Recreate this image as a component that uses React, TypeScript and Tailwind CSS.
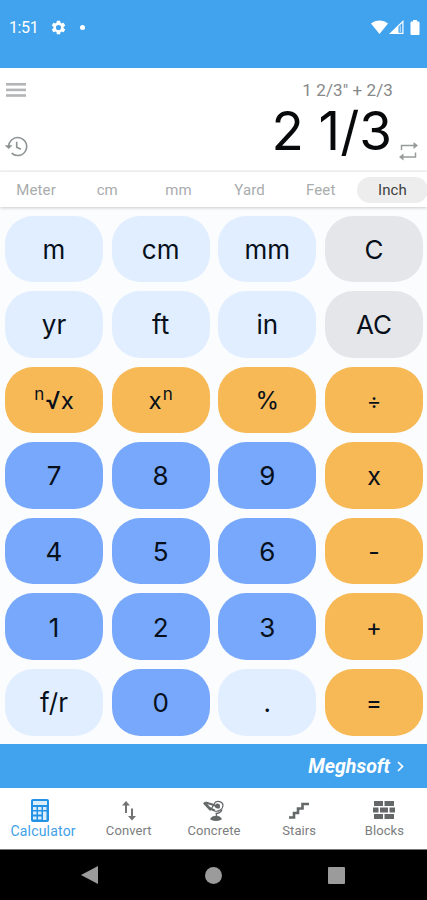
import React from 'react';

interface KeyDef {
  label: React.ReactNode;
  tone: 'light' | 'gray' | 'orange' | 'blue';
}

const tones = {
  light: 'bg-[#e1eeff]',
  gray: 'bg-[#e5e6e9]',
  orange: 'bg-[#f6b956]',
  blue: 'bg-[#78a8fb]',
};

const RootLabel = () => (
  <span className="flex items-baseline pt-px">
    <span className="mt-[-3px] self-start text-[17px] leading-[17px]">n</span>
    <span className="ml-px text-[24px] font-medium">√</span>
    <span className="text-[24px]">x</span>
  </span>
);

const PowerLabel = () => (
  <span className="flex items-baseline pt-px">
    <span className="text-[24px]">x</span>
    <span className="mt-[-3px] ml-px self-start text-[17px] leading-[17px]">n</span>
  </span>
);

const Sign = ({ children }: { children: string }) => <span className="pt-px text-[22px]">{children}</span>;

const keys: KeyDef[] = [
  { label: 'm', tone: 'light' },
  { label: 'cm', tone: 'light' },
  { label: 'mm', tone: 'light' },
  { label: 'C', tone: 'gray' },
  { label: 'yr', tone: 'light' },
  { label: 'ft', tone: 'light' },
  { label: 'in', tone: 'light' },
  { label: 'AC', tone: 'gray' },
  { label: <RootLabel />, tone: 'orange' },
  { label: <PowerLabel />, tone: 'orange' },
  { label: <span className="text-[24px]">%</span>, tone: 'orange' },
  { label: <Sign>÷</Sign>, tone: 'orange' },
  { label: '7', tone: 'blue' },
  { label: '8', tone: 'blue' },
  { label: '9', tone: 'blue' },
  { label: <span className="text-[25px]">x</span>, tone: 'orange' },
  { label: '4', tone: 'blue' },
  { label: '5', tone: 'blue' },
  { label: '6', tone: 'blue' },
  { label: <span className="text-[25px]">-</span>, tone: 'orange' },
  { label: '1', tone: 'blue' },
  { label: '2', tone: 'blue' },
  { label: '3', tone: 'blue' },
  { label: <span className="text-[24px]">+</span>, tone: 'orange' },
  { label: 'f/r', tone: 'light' },
  { label: '0', tone: 'blue' },
  { label: '.', tone: 'light' },
  { label: <span className="text-[24px]">=</span>, tone: 'orange' },
];

const units = ['Meter', 'cm', 'mm', 'Yard', 'Feet', 'Inch'];

const StatusBar: React.FC = () => (
  <div className="flex h-[68px] items-start justify-between bg-[#41a3ed] pt-[18px] pl-[9px] pr-[7px] text-white">
    <div className="flex h-5 items-center">
      <span className="w-[42px] text-[16px] leading-5 tracking-[-0.400px]">1:51</span>
      <svg className="mb-[2px]" width="15" height="15" viewBox="1.500 1.500 21 21" fill="currentColor">
        <path d="M19.14 12.94c.04-.3.06-.61.06-.94s-.02-.64-.07-.94l2.03-1.58a.5.5 0 0 0 .12-.61l-1.92-3.32a.5.5 0 0 0-.59-.22l-2.39.96a7 7 0 0 0-1.62-.94l-.36-2.54A.5.5 0 0 0 13.92 2.4h-3.84a.5.5 0 0 0-.47.41l-.36 2.54a7 7 0 0 0-1.62.94l-2.39-.96a.5.5 0 0 0-.59.22L2.73 8.87a.5.5 0 0 0 .12.61l2.03 1.58a6 6 0 0 0 0 1.88l-2.03 1.58a.5.5 0 0 0-.12.61l1.92 3.32c.12.22.37.29.59.22l2.39-.96c.5.38 1.03.7 1.62.94l.36 2.54c.05.24.24.41.48.41h3.84c.24 0 .44-.17.47-.41l.36-2.54a7 7 0 0 0 1.62-.94l2.39.96c.22.08.47 0 .59-.22l1.92-3.32a.5.5 0 0 0-.12-.61zM12 15.6a3.6 3.6 0 1 1 0-7.2 3.6 3.6 0 0 1 0 7.2z" />
      </svg>
      <span className="mb-[2px] ml-[14px] h-[5px] w-[5px] rounded-full bg-white" />
    </div>
    <div className="flex h-[18px] items-center">
      <svg width="17" height="14" viewBox="0 0 17 14" fill="currentColor">
        <path d="M0 3.600C4.800-.600 12.200-.600 17 3.600L8.500 14z" />
      </svg>
      <svg className="ml-[1px]" width="15" height="14" viewBox="0 0 15 14" fill="none">
        <path d="M0 14 14.500 0V14z" fill="currentColor" />
        <path d="M9.500 6.600 13.300 3v9.800H9.500z" fill="#41a3ed" />
        <path d="M10.700 6.500v5.500h1.300V5z" fill="#a9d5f7" />
      </svg>
      <svg className="ml-[6px]" width="10" height="15" viewBox="0 0 10 15" fill="currentColor">
        <path d="M3 0h4v1.500h1.500a1 1 0 0 1 1 1V14a1 1 0 0 1-1 1h-7a1 1 0 0 1-1-1V2.500a1 1 0 0 1 1-1H3z" />
      </svg>
    </div>
  </div>
);

const Display: React.FC = () => (
  <div className="flex h-[104px] justify-between border-b-2 border-[#f3f4f5] bg-white">
    <div className="flex flex-col pl-[5px] pt-[15px]">
      <svg className="ml-[1px]" width="20" height="16" viewBox="0 0 20 16" fill="#b3b5b6">
        <rect y="0" width="20" height="2.600" />
        <rect y="5.600" width="20" height="2.600" />
        <rect y="11.200" width="20" height="2.600" />
      </svg>
      <svg className="mt-[37px]" width="23" height="21" viewBox="0 0 23 21" fill="none" stroke="#8d9394" strokeWidth="1.600">
        <path d="M3.700 11.500A9 9 0 1 1 6.600 17.200" />
        <path d="M-.2 9.300h7.800L3.700 13z" fill="#8d9394" stroke="none" />
        <path d="M11.700 5.800v5.400l4.200 2" />
      </svg>
    </div>
    <div className="flex">
      <div className="flex flex-col items-end">
        <span className="mt-[11px] pr-[6px] text-[17px] leading-[22px] tracking-[0.100px] text-[#868889]">1 2/3" + 2/3</span>
        <span className="pr-[7px] font-[Inter,sans-serif] text-[53px] leading-[60px] text-[#08090a]">2 1/3</span>
      </div>
      <svg className="mt-[73px] mr-[9px]" width="19" height="20" viewBox="0 0 19 20" fill="none" stroke="#979b9c" strokeWidth="1.500">
        <path d="M2.500 9V4.500h13M16.500 11.500V16h-13" />
        <path d="M14.500 1v7l4.500-3.500zM4.500 12.500v7L0 16z" fill="#979b9c" stroke="none" />
      </svg>
    </div>
  </div>
);

const UnitTabs: React.FC = () => (
  <div className="z-10 grid h-[35px] grid-cols-6 items-center bg-white pt-px text-center text-[15px] tracking-[0.100px] text-[#a9acad] shadow-[0_1px_3px_rgba(0,0,0,0.200)]">
    {units.map((unit) => (
      <span
        key={unit}
        className={unit === 'Inch' ? 'mr-[-1px] ml-[1px] rounded-full bg-[#ededee] pt-px leading-[25px] text-[#3d3f40]' : 'pt-px pl-px leading-[25px]'}
      >
        {unit}
      </span>
    ))}
  </div>
);

const Keypad: React.FC = () => (
  <div className="grid h-[537px] grid-cols-4 grid-rows-7 gap-x-[8.700px] gap-y-[8.800px] bg-[#fafcfe] pt-[8.500px] pr-1 pb-[8.500px] pl-[5px]">
    {keys.map((key, i) => (
      <button
        key={i}
        className={`flex items-center justify-center rounded-[28px] pt-[2px] font-[Inter,sans-serif] text-[26px] leading-none text-[#07101a] ${tones[key.tone]}`}
      >
        {key.label}
      </button>
    ))}
  </div>
);

const CalculatorIcon = () => (
  <svg width="18" height="23" viewBox="0 0 18 23">
    <rect width="18" height="23" rx="2" fill="#2492e4" />
    <path d="M2 2h14v4H2zM2 8h3.500v3H2zM7 8h3.500v3H7zM12 8h3.500v3H12zM2 12.500h3.500v3H2zM7 12.500h3.500v3H7zM12 12.500h3.500V21H12zM2 17.500h3.500v3H2zM7 17.500h3.500v3H7z" fill="#d9edfc" />
  </svg>
);

const ConvertIcon = () => (
  <svg width="14" height="20" viewBox="0 0 14 20" fill="#737373">
    <path d="M4 0 8 4.500H5V12H3V4.500H0zM10 19.500 6 15h3V7.500h2V15h3z" />
  </svg>
);

const ConcreteIcon = () => (
  <svg width="22" height="22" viewBox="0 0 22 22" fill="none" stroke="#656869">
    <path d="M1 2.500 8 10" strokeWidth="2.600" />
    <path d="M2.500 2.500 11 5" strokeWidth="2" />
    <path d="M8 9.500 12.500 2c3-1.500 7.500 0 7.500 3.500 0 4-4.500 6.500-8.500 5.500z" strokeWidth="1.200" />
    <path d="m9.500 4.500 7 3.500M7 8l5 2.500" strokeWidth="1.700" />
    <circle cx="14.500" cy="6" r="2.500" fill="#656869" stroke="none" />
    <path d="M19 9.500c-1 3-4 4-6.500 4M13.500 13v4" strokeWidth="1.300" />
    <path d="M7 19c2-4.500 10-4.500 12 0-2 2.500-10 2.500-12 0z" fill="#656869" stroke="none" />
  </svg>
);

const StairsIcon = () => (
  <svg width="20" height="17" viewBox="0 0 20 17" fill="none" stroke="#656869" strokeWidth="2.600">
    <path d="M0 15.500h5V11h4V6.500h4.500V2H20" />
  </svg>
);

const BlocksIcon = () => (
  <svg width="22" height="19" viewBox="0 0 22 19" fill="#656869">
    <path d="M1 0h9v5H1zM11.500 0H21v5h-9.500zM0 6.500h5.500v5H0zM7 6.500h8v5H7zM16.500 6.500H22v5h-5.500zM1 13h9v5H1zM11.500 13H21v5h-9.500z" />
  </svg>
);

const navItems = [
  { label: 'Calculator', icon: <CalculatorIcon /> },
  { label: 'Convert', icon: <ConvertIcon /> },
  { label: 'Concrete', icon: <ConcreteIcon /> },
  { label: 'Stairs', icon: <StairsIcon /> },
  { label: 'Blocks', icon: <BlocksIcon /> },
];

const BottomNav: React.FC = () => (
  <div className="grid h-[62px] grid-cols-5 border-b border-[#777] bg-white pl-px">
    {navItems.map((item, i) => (
      <button
        key={item.label}
        className={`flex flex-col items-center pt-[10px] leading-4 ${i === 0 ? 'pr-px text-[14px] tracking-[0.200px] text-[#409fe7]' : 'text-[13px] tracking-[0.100px] text-[#7b7d7e]'}`}
      >
        <span className={`flex h-[25px] items-center ${i === 0 ? 'mr-[7px]' : ''}`}>{item.icon}</span>
        <span>{item.label}</span>
      </button>
    ))}
  </div>
);

const SystemNav: React.FC = () => (
  <div className="flex h-[50px] items-center justify-between bg-black pr-[82px] pl-[81px]">
    <svg width="17" height="20" viewBox="0 0 17 20" fill="#9b9b9b">
      <path d="M17 1v18L0 10z" />
    </svg>
    <span className="h-[17px] w-[17px] rounded-full bg-[#9b9b9b]" />
    <span className="h-[17px] w-[17px] rounded-[1px] bg-[#9b9b9b]" />
  </div>
);

export default function App() {
  return (
    <div className="flex h-[900px] w-[427px] flex-col overflow-hidden bg-white font-[Roboto,sans-serif]">
      <StatusBar />
      <Display />
      <UnitTabs />
      <Keypad />
      <div className="flex h-11 items-center justify-end bg-[#41a3ed] pr-[23px] text-white">
        <span className="pt-[2px] text-[19.500px] font-bold italic">Meghsoft</span>
        <svg className="ml-[7px]" width="7" height="11" viewBox="0 0 7 11" fill="none" stroke="currentColor" strokeWidth="1.700">
          <path d="m1 1 4.500 4.500L1 10" />
        </svg>
      </div>
      <BottomNav />
      <SystemNav />
    </div>
  );
}
